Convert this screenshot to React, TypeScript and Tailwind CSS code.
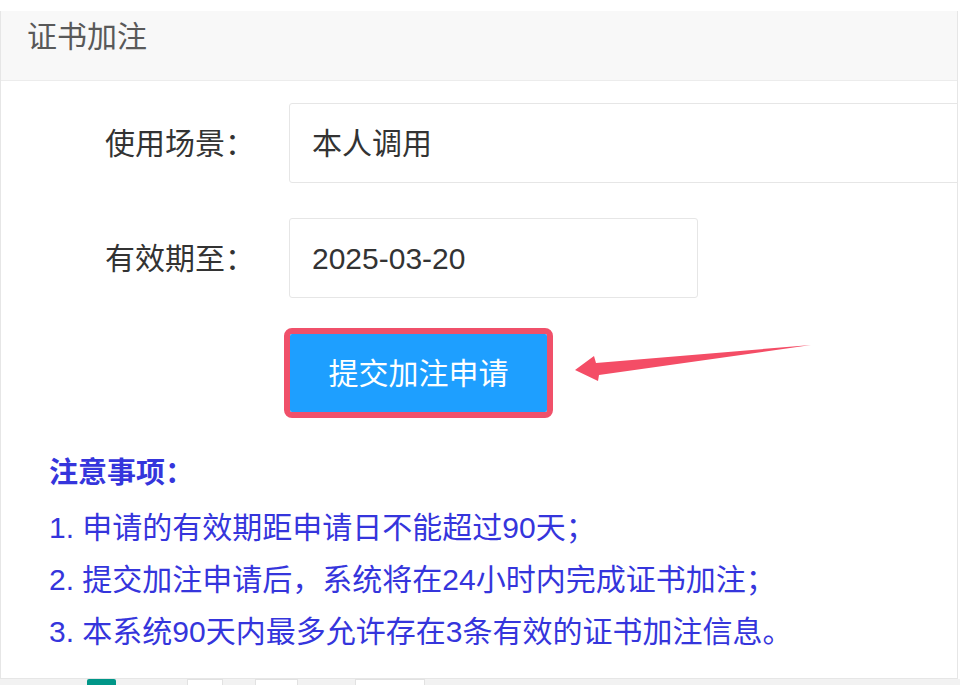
const notes = [
  "1. 申请的有效期距申请日不能超过90天；",
  "2. 提交加注申请后，系统将在24小时内完成证书加注；",
  "3. 本系统90天内最多允许存在3条有效的证书加注信息。",
];

function FormRow({ label, value, inputClass }: { label: string; value: string; inputClass: string }) {
  return (
    <div className="flex h-[80px] items-center">
      <div className="w-[254px] shrink-0 text-right text-[30px] text-[#333]">{label}</div>
      <div
        className={`ml-[34px] flex h-[80px] shrink-0 items-center rounded-[3px] border border-[#e6e6e6] bg-white pl-[22px] text-[30px] text-[#333] ${inputClass}`}
      >
        {value}
      </div>
    </div>
  );
}

export default function App() {
  return (
    <div className="relative h-[685px] w-[960px] overflow-hidden bg-white font-['Liberation_Sans','Noto_Sans_CJK_SC',sans-serif]">
      <div className="pt-[11px]">
        <div className="w-[958px] overflow-hidden border-x border-b border-[#e6e6e6]">
          <div className="h-[70px] border-b border-[#ececec] bg-[#f8f8f8] pl-[26px] pt-[11px] text-[30px] leading-[30px] text-[#595959]">
            证书加注
          </div>

          <div className="h-[597px] pt-[22px]">
            <FormRow label="使用场景：" value="本人调用" inputClass="w-[700px]" />
            <div className="mt-[35px]">
              <FormRow label="有效期至：" value="2025-03-20" inputClass="w-[409px]" />
            </div>

            <div className="ml-[283px] mt-[30px] w-fit rounded-[8px] border-[6px] border-[#f0506a]">
              <button className="flex h-[78px] w-[257px] items-center justify-center rounded-[2px] bg-[#1e9fff] text-[30px] text-white">
                提交加注申请
              </button>
            </div>

            <div className="mt-[35px] pl-[48px] text-[#3535dc]">
              <p className="text-[29px] font-bold leading-[40px]">注意事项：</p>
              <ul className="mt-[9px] text-[30px] leading-[52px]">
                {notes.map((n) => (
                  <li key={n}>{n}</li>
                ))}
              </ul>
            </div>
          </div>
        </div>
      </div>

      <div className="flex h-[6px] items-start bg-[#f2f2f2]">
        <span className="ml-[87px] h-[6px] w-[29px] rounded-t-[2px] bg-[#009688]" />
        <span className="ml-[71px] h-[6px] w-[36px] border-x border-t border-[#e2e2e2] bg-white" />
        <span className="ml-[32px] h-[6px] w-[43px] border-x border-t border-[#e2e2e2] bg-white" />
        <span className="ml-[57px] h-[6px] w-[70px] border-x border-t border-[#e2e2e2] bg-white" />
      </div>

      {/* annotation arrow pointing at the submit button */}
      <svg className="pointer-events-none absolute left-0 top-0" width="960" height="685" viewBox="0 0 960 685">
        <polygon points="575,370 594,356 596,363 811,345 599,375 598,381" fill="#f44d66" />
      </svg>
    </div>
  );
}
